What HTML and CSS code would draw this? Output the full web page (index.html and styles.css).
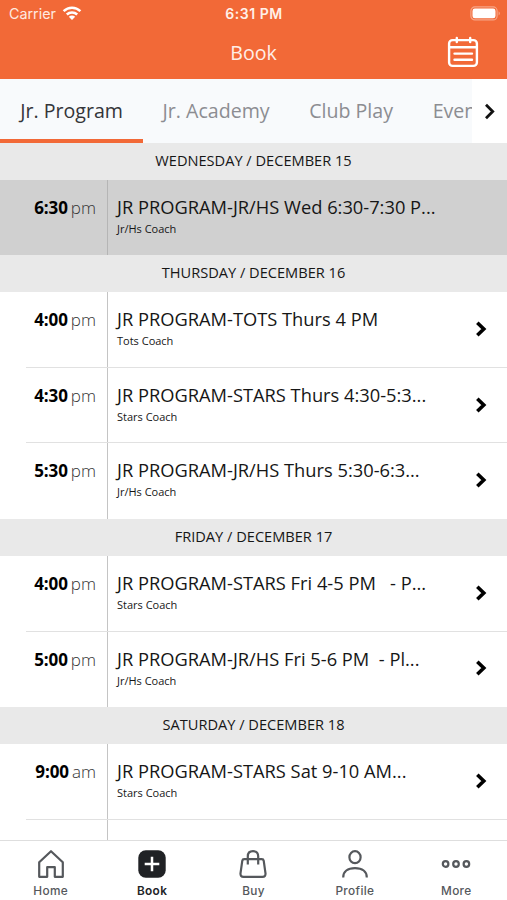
FILE: index.html
```html
<!DOCTYPE html>
<html lang="en">
<head>
<meta charset="utf-8">
<title>Book</title>
<link rel="stylesheet" href="styles.css">
</head>
<body>
<svg class="defs" width="0" height="0"><symbol id="chev" viewBox="0 0 12 16"><path d="M2.3 1.7 8.8 8l-6.5 6.3" fill="none" stroke="currentColor" stroke-width="3.6"/></symbol></svg>
<div class="app">
  <header class="top">
    <div class="status">
      <div class="carrier"><span>Carrier</span>
        <svg width="20" height="15" viewBox="0 0 20 15"><g fill="none" stroke="#fff" stroke-width="2.5"><path d="M1.6 5.2C6.4.6 13.6.6 18.4 5.2"/><path d="M4.8 8.5c3-2.8 7.4-2.8 10.4 0"/></g><path d="M10 14 6.8 10.7c1.8-1.6 4.6-1.6 6.4 0z" fill="#fff"/></svg>
      </div>
      <span class="clock">6:31 PM</span>
      <svg class="battery" width="31" height="15" viewBox="0 0 31 15"><rect x=".9" y=".9" width="26.2" height="13" rx="4" fill="none" stroke="#fff" stroke-opacity=".4" stroke-width="1.2"/><rect x="2.5" y="2.5" width="23" height="9.8" rx="2.4" fill="#fff"/><path d="M28.7 5.2q2 2.2 0 4.4z" fill="#fff" fill-opacity=".5"/></svg>
    </div>
    <div class="bar"><h1>Book</h1>
      <svg class="calendar" width="32" height="32" viewBox="0 0 32 32" fill="none" stroke="#fff" stroke-width="2.4" stroke-linecap="round"><rect x="2.1" y="4.1" width="27.8" height="25.8" rx="3.5"/><path d="M2.5 11.2h27M9.8 2v4M23.2 2v4M7.5 17.6h17.5M7.5 23.7h17.5"/></svg>
    </div>
  </header>
  <nav class="tabs">
    <div class="scroller"><span class="tab active">Jr. Program</span><span class="tab">Jr. Academy</span><span class="tab">Club Play</span><span class="tab">Events</span></div>
    <div class="next"><svg width="12" height="17" viewBox="0 0 12 17"><path d="M2 1.8 8.7 8.5 2 15.2" fill="none" stroke="#111" stroke-width="2.8"/></svg></div>
  </nav>
  <main class="list">
    <h2>WEDNESDAY / DECEMBER 15</h2>
    <article class="row past"><div class="time"><b>6:30</b><i>pm</i></div><div class="info"><p>JR PROGRAM-JR/HS Wed 6:30-7:30 P...</p><small>Jr/Hs Coach</small></div></article>
    <h2>THURSDAY / DECEMBER 16</h2>
    <article class="row"><div class="time"><b>4:00</b><i>pm</i></div><div class="info"><p>JR PROGRAM-TOTS Thurs 4 PM</p><small>Tots Coach</small></div><svg class="chev"><use href="#chev"/></svg></article>
    <article class="row"><div class="time"><b>4:30</b><i>pm</i></div><div class="info"><p>JR PROGRAM-STARS Thurs 4:30-5:3...</p><small>Stars Coach</small></div><svg class="chev"><use href="#chev"/></svg></article>
    <article class="row"><div class="time"><b>5:30</b><i>pm</i></div><div class="info"><p>JR PROGRAM-JR/HS Thurs 5:30-6:3...</p><small>Jr/Hs Coach</small></div><svg class="chev"><use href="#chev"/></svg></article>
    <h2>FRIDAY / DECEMBER 17</h2>
    <article class="row"><div class="time"><b>4:00</b><i>pm</i></div><div class="info"><p>JR PROGRAM-STARS Fri 4-5 PM &nbsp; - P...</p><small>Stars Coach</small></div><svg class="chev"><use href="#chev"/></svg></article>
    <article class="row"><div class="time"><b>5:00</b><i>pm</i></div><div class="info"><p>JR PROGRAM-JR/HS Fri 5-6 PM &nbsp;- Pl...</p><small>Jr/Hs Coach</small></div><svg class="chev"><use href="#chev"/></svg></article>
    <h2>SATURDAY / DECEMBER 18</h2>
    <article class="row"><div class="time"><b>9:00</b><i>am</i></div><div class="info"><p>JR PROGRAM-STARS Sat 9-10 AM...</p><small>Stars Coach</small></div><svg class="chev"><use href="#chev"/></svg></article>
    <article class="row"><div class="time"></div><div class="info"></div></article>
  </main>
  <footer class="nav">
    <div class="item"><svg viewBox="0 0 30 30"><path d="M3.2 13.3 15 2.2l11.8 11.1v14.5h-8v-9.6h-7.6v9.6h-8z"/></svg><span>Home</span></div>
    <div class="item on"><svg viewBox="0 0 30 30"><rect x="1.3" y="1.3" width="27.4" height="27.4" rx="7.5" fill="#202225" stroke="none"/><path d="M15 7.7v14.6M7.7 15h14.6" stroke="#fff" stroke-width="2.5"/></svg><span>Book</span></div>
    <div class="item"><svg viewBox="0 0 30 30"><path d="M6.2 10.1h17.6q1.6 0 1.9 1.6l1.8 12.6q.3 3.5-3 3.5h-19q-3.3 0-3-3.5l1.8-12.6q.3-1.6 1.9-1.6zM9.8 15.5V7.5q0-5.3 5.2-5.3t5.2 5.3v8"/></svg><span>Buy</span></div>
    <div class="item"><svg viewBox="0 0 30 30"><ellipse cx="15" cy="8.2" rx="5.6" ry="6"/><path d="M3.2 28.4c0-5.8 4.4-9.2 11.8-9.2s11.8 3.4 11.8 9.2"/></svg><span>Profile</span></div>
    <div class="item"><svg viewBox="0 0 30 30"><circle cx="4.6" cy="15" r="2.8"/><circle cx="15" cy="15" r="2.8"/><circle cx="25.4" cy="15" r="2.8"/></svg><span>More</span></div>
  </footer>
</div>
</body>
</html>
```
FILE: styles.css
```css
* { box-sizing: border-box; }
body, h1, h2, p { margin: 0; font-weight: 400; }
body { font-family: "Open Sans", "Noto Sans", sans-serif; color: #161616; }
.defs { position: absolute; }
.app { display: flex; flex-direction: column; width: 507px; height: 900px; overflow: hidden; background: #fff; }
.top { flex: none; height: 79px; background: #f26937; color: #fff; }
.status { display: grid; grid-template-columns: 1fr auto 1fr; align-items: center; height: 27px; padding: 0 5px 0 9px; font: 400 14.3px/27px Inter, sans-serif; }
.carrier { display: flex; align-items: center; gap: 6px; color: #ffe9e0; }
.clock { margin-right: 3px; font-weight: 600; font-size: 14px; letter-spacing: .55px; color: #fff0e9; }
.battery { justify-self: end; margin-right: 1px; }
.carrier svg { margin-top: -1px; }
.bar { display: grid; grid-template-columns: 1fr auto 1fr; align-items: center; height: 52px; padding-right: 28px; padding-left: 28px; }
.bar h1 { grid-column: 2; font-size: 19.6px; line-height: 50px; color: #ffeee7; }
.calendar { justify-self: end; margin-top: -2px; }
.tabs { flex: none; display: flex; height: 64px; background: #f8fafc; }
.scroller { display: flex; flex: 1; min-width: 0; overflow: hidden; }
.tab { flex: none; padding: 0 19.8px; line-height: 64px; font-size: 19.6px; color: #8c8d92; white-space: nowrap; }
.tab.active { width: 142.7px; padding-left: 20.2px; color: #343539; border-bottom: 4px solid #f26937; }
.next { display: flex; align-items: center; width: 35px; padding-left: 12px; background: #fff; }
.list { flex: 1; min-height: 0; overflow: hidden; }
h2 { height: 36.6px; background: #e9e9e9; text-align: center; font-size: 14.6px; line-height: 35px; }
.row { display: flex; position: relative; height: 75.75px; }
.row.past { background: #d0d0d0; }
.row + .row::before { content: ""; position: absolute; left: 26px; right: 0; top: -1px; height: 1px; background: #e1e1e1; }
.time { display: flex; justify-content: flex-end; gap: 3px; width: 107.5px; padding: 15px 10.5px 0 0; border-right: 1.5px solid #c4c4c4; font-size: 17px; line-height: 25px; }
.past .time { border-color: #b5b5b5; }
.time b { font-weight: 700; letter-spacing: -.1px; color: #000; }
.time i { font-style: normal; font-weight: 300; color: #333; }
.info { flex: 1; padding: 14px 0 0 9.5px; white-space: nowrap; }
.info p { font-size: 18.3px; line-height: 25px; }
.info small { display: block; margin-top: 1px; font-size: 11px; line-height: 18px; }
.chev { align-self: center; width: 12px; height: 16px; margin: -2px 20px 0 0; color: #000; }
.nav { flex: none; display: grid; grid-template-columns: repeat(5, 1fr); height: 60px; border-top: 1px solid #dedede; background: #fff; }
.item { display: flex; flex-direction: column; align-items: center; padding-top: 8px; font: 500 11.8px/15px Inter, sans-serif; letter-spacing: .35px; color: #55585c; }
.item svg { width: 30px; height: 30px; margin-bottom: 5px; fill: none; stroke: #55585c; stroke-width: 2.2; stroke-linejoin: round; }
.item.on { color: #222427; font-weight: 600; }
```
